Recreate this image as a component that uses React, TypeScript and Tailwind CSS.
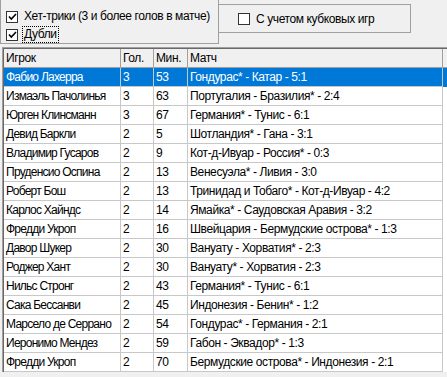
import React from 'react';

type Row = { igrok: string; gol: string; min: string; match: string };

const ROWS: Row[] = [
  { igrok: 'Фабио Лахерра', gol: '3', min: '53', match: 'Гондурас* - Катар - 5:1' },
  { igrok: 'Измаэль Пачолинья', gol: '3', min: '63', match: 'Португалия - Бразилия* - 2:4' },
  { igrok: 'Юрген Клинсманн', gol: '3', min: '67', match: 'Германия* - Тунис - 6:1' },
  { igrok: 'Девид Баркли', gol: '2', min: '5', match: 'Шотландия* - Гана - 3:1' },
  { igrok: 'Владимир Гусаров', gol: '2', min: '9', match: 'Кот-д-Ивуар - Россия* - 0:3' },
  { igrok: 'Пруденсио Оспина', gol: '2', min: '13', match: 'Венесуэла* - Ливия - 3:0' },
  { igrok: 'Роберт Бош', gol: '2', min: '13', match: 'Тринидад и Тобаго* - Кот-д-Ивуар - 4:2' },
  { igrok: 'Карлос Хайндс', gol: '2', min: '14', match: 'Ямайка* - Саудовская Аравия - 3:2' },
  { igrok: 'Фредди Укроп', gol: '2', min: '16', match: 'Швейцария - Бермудские острова* - 1:3' },
  { igrok: 'Давор Шукер', gol: '2', min: '30', match: 'Вануату - Хорватия* - 2:3' },
  { igrok: 'Роджер Хант', gol: '2', min: '30', match: 'Вануату* - Хорватия - 2:3' },
  { igrok: 'Нильс Стронг', gol: '2', min: '43', match: 'Германия* - Тунис - 6:1' },
  { igrok: 'Сака Бессанви', gol: '2', min: '45', match: 'Индонезия - Бенин* - 1:2' },
  { igrok: 'Марсело де Серрано', gol: '2', min: '54', match: 'Гондурас* - Германия - 2:1' },
  { igrok: 'Иеронимо Мендез', gol: '2', min: '59', match: 'Габон - Эквадор* - 1:3' },
  { igrok: 'Фредди Укроп', gol: '2', min: '70', match: 'Бермудские острова* - Индонезия - 2:1' },
];

function CheckBox({ checked }: { checked: boolean }) {
  return (
    <span className="w-[12px] h-[12px] border border-[#333] bg-white flex items-center justify-center shrink-0">
      {checked && (
        <svg width="9" height="8" viewBox="0 0 9 8">
          <path d="M1 3.5 L3.3 6 L8 1" stroke="#000" strokeWidth="1.6" fill="none" />
        </svg>
      )}
    </span>
  );
}

export default function App() {
  return (
    <div
      className="w-[447px] h-[377px] overflow-hidden bg-[#f0f0f0] text-[12px] tracking-[-0.4px] text-black"
      style={{ fontFamily: '"Liberation Sans", Arial, sans-serif' }}
    >
      {/* Фильтры */}
      <div className="flex items-start h-[47px]">
        <div className="w-[219px] h-[44px] border-l border-r border-b border-[#a0a0a0] flex flex-col pl-[5px] pt-[10px] gap-[5px]">
          <label className="flex items-center gap-[6px] h-[13px] whitespace-nowrap">
            <CheckBox checked />
            <span className="leading-[13px]">Хет-трики (3 и более голов в матче)</span>
          </label>
          <label className="flex items-center gap-[5px] h-[13px] whitespace-nowrap">
            <CheckBox checked />
            <span className="leading-[15px] px-[1px] outline-1 outline-dotted outline-black">Дубли</span>
          </label>
        </div>
        <div className="w-[192px] h-[29px] mt-[4px] border-t border-r border-b border-[#a0a0a0] flex items-center pl-[19px] gap-[6px] whitespace-nowrap">
          <CheckBox checked={false} />
          <span>С учетом кубковых игр</span>
        </div>
      </div>

      {/* Таблица */}
      <div className="ml-[2px] border-t border-l border-[#a0a0a0]">
        <div className="border-t border-l border-[#696969] bg-white">
          <div className="flex h-[19px] bg-[#f0f0f0]">
            <div className="w-[117px] border-r border-b border-[#a0a0a0] pl-[2px] leading-[18px]">Игрок</div>
            <div className="w-[33px] border-r border-b border-[#a0a0a0] pl-[2px] leading-[18px]">Гол.</div>
            <div className="w-[34px] border-r border-b border-[#a0a0a0] pl-[2px] leading-[18px]">Мин.</div>
            <div className="w-[255px] border-r border-b border-[#a0a0a0] pl-[2px] leading-[18px]">Матч</div>
            <div className="flex-1 border-b border-[#a0a0a0]" />
          </div>
          {ROWS.map((r, i) => (
            <div key={i} className={`flex h-[19px] ${i === 0 ? 'bg-[#0078d7] text-white' : ''}`}>
              <div className="w-[117px] border-r border-b border-[#c8c8c8] pl-[2px] leading-[18px] tracking-[-0.75px] whitespace-nowrap overflow-hidden">{r.igrok}</div>
              <div className="w-[33px] border-r border-b border-[#c8c8c8] pl-[2px] leading-[18px]">{r.gol}</div>
              <div className="w-[34px] border-r border-b border-[#c8c8c8] pl-[2px] leading-[18px]">{r.min}</div>
              <div className="w-[255px] border-r border-b border-[#c8c8c8] pl-[2px] leading-[18px] whitespace-nowrap overflow-hidden">{r.match}</div>
              <div className="flex-1" />
            </div>
          ))}
        </div>
      </div>
    </div>
  );
}
